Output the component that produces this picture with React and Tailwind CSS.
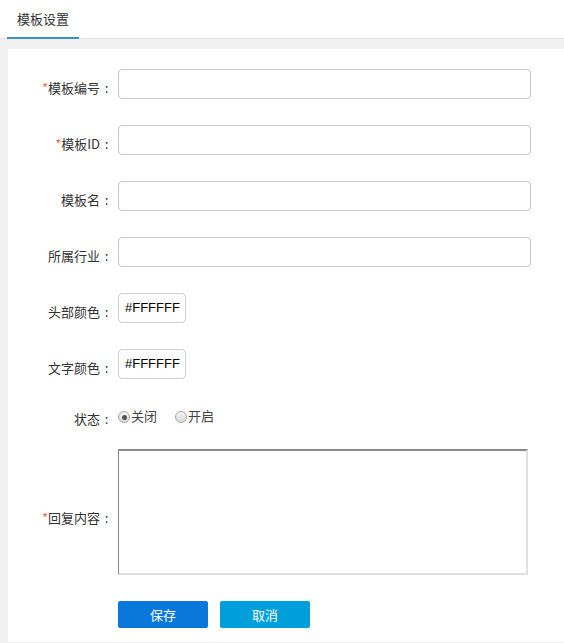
import React from "react";

const FONT = { fontFamily: '"Microsoft YaHei", "Noto Sans CJK SC", "Noto Sans", sans-serif' };

function Label({ req, children, className = "" }) {
  return (
    <div className={"w-[105px] shrink-0 flex justify-end text-[13px] text-[#333] " + className}>
      {req && <span className="text-[#f4694c]">*</span>}
      <span>{children}</span>
      <span className="w-[13px] text-center">:</span>
    </div>
  );
}

function TextRow({ req, label, first }) {
  return (
    <div className={"flex items-center h-[30px] " + (first ? "" : "mt-[26px]")}>
      <Label req={req} className="pt-[8px]">{label}</Label>
      <div className="ml-[5px] w-[413px] h-[30px] border border-[#c8c8c8] rounded-[4px] bg-white" />
    </div>
  );
}

function ColorRow({ label }) {
  return (
    <div className="flex items-center h-[30px] mt-[26px]">
      <Label className="pt-[8px]">{label}</Label>
      <div
        className="ml-[5px] w-[68px] h-[30px] border border-[#d0d0d0] rounded-[4px] bg-white flex items-center pl-[6px] text-[13px] text-black"
        style={{ fontFamily: '"Liberation Sans", Arial, sans-serif' }}
      >
        #FFFFFF
      </div>
    </div>
  );
}

function Radio({ checked, label, className = "" }) {
  return (
    <div className={"flex items-center " + className}>
      <div className="w-[12px] h-[12px] rounded-full border border-[#a8a8a8] bg-gradient-to-b from-[#f4f4f4] to-[#d8d8d8] flex items-center justify-center">
        {checked && <div className="w-[5px] h-[5px] rounded-full bg-[#555]" />}
      </div>
      <span className="ml-[1px] text-[13px] text-[#444] -mt-[3px]">{label}</span>
    </div>
  );
}

export default function App() {
  return (
    <div className="w-[564px] h-[643px] bg-[#f1f1f1] overflow-hidden" style={FONT}>
      <div className="h-[39px] bg-white border-b border-[#e4e4e4] px-[7px] flex">
        <div className="w-[72px] h-[39px] border-b-2 border-[#3b8fcf] flex items-center justify-center text-[13px] text-[#333]">
          模板设置
        </div>
      </div>
      <div className="pt-[10px] pl-[8px] h-[603px]">
        <div className="bg-white h-full pt-[20px]">
          <TextRow req first label="模板编号" />
          <TextRow req label="模板ID" />
          <TextRow label="模板名" />
          <TextRow label="所属行业" />
          <ColorRow label="头部颜色" />
          <ColorRow label="文字颜色" />
          <div className="flex items-center h-[24px] mt-[26px]">
            <Label className="mt-[3px]">状态</Label>
            <Radio checked label="关闭" className="ml-[5px]" />
            <Radio label="开启" className="ml-[18px]" />
          </div>
          <div className="flex mt-[20px]">
            <Label req className="mt-[60px] leading-[17px]">回复内容</Label>
            <div className="ml-[5px] w-[410px] h-[126px] bg-white border-t-2 border-l border-t-[#8a8a8a] border-l-[#8a8a8a] border-r-2 border-b-2 border-r-[#e0e0e0] border-b-[#e0e0e0]" />
          </div>
          <div className="flex mt-[26px] pl-[110px] gap-[12px]">
            <div className="w-[90px] h-[27px] bg-[#0a77da] rounded-[2px] flex items-center justify-center text-[13px] text-white">
              保存
            </div>
            <div className="w-[90px] h-[27px] bg-[#009fdc] rounded-[2px] flex items-center justify-center text-[13px] text-white">
              取消
            </div>
          </div>
        </div>
      </div>
    </div>
  );
}
